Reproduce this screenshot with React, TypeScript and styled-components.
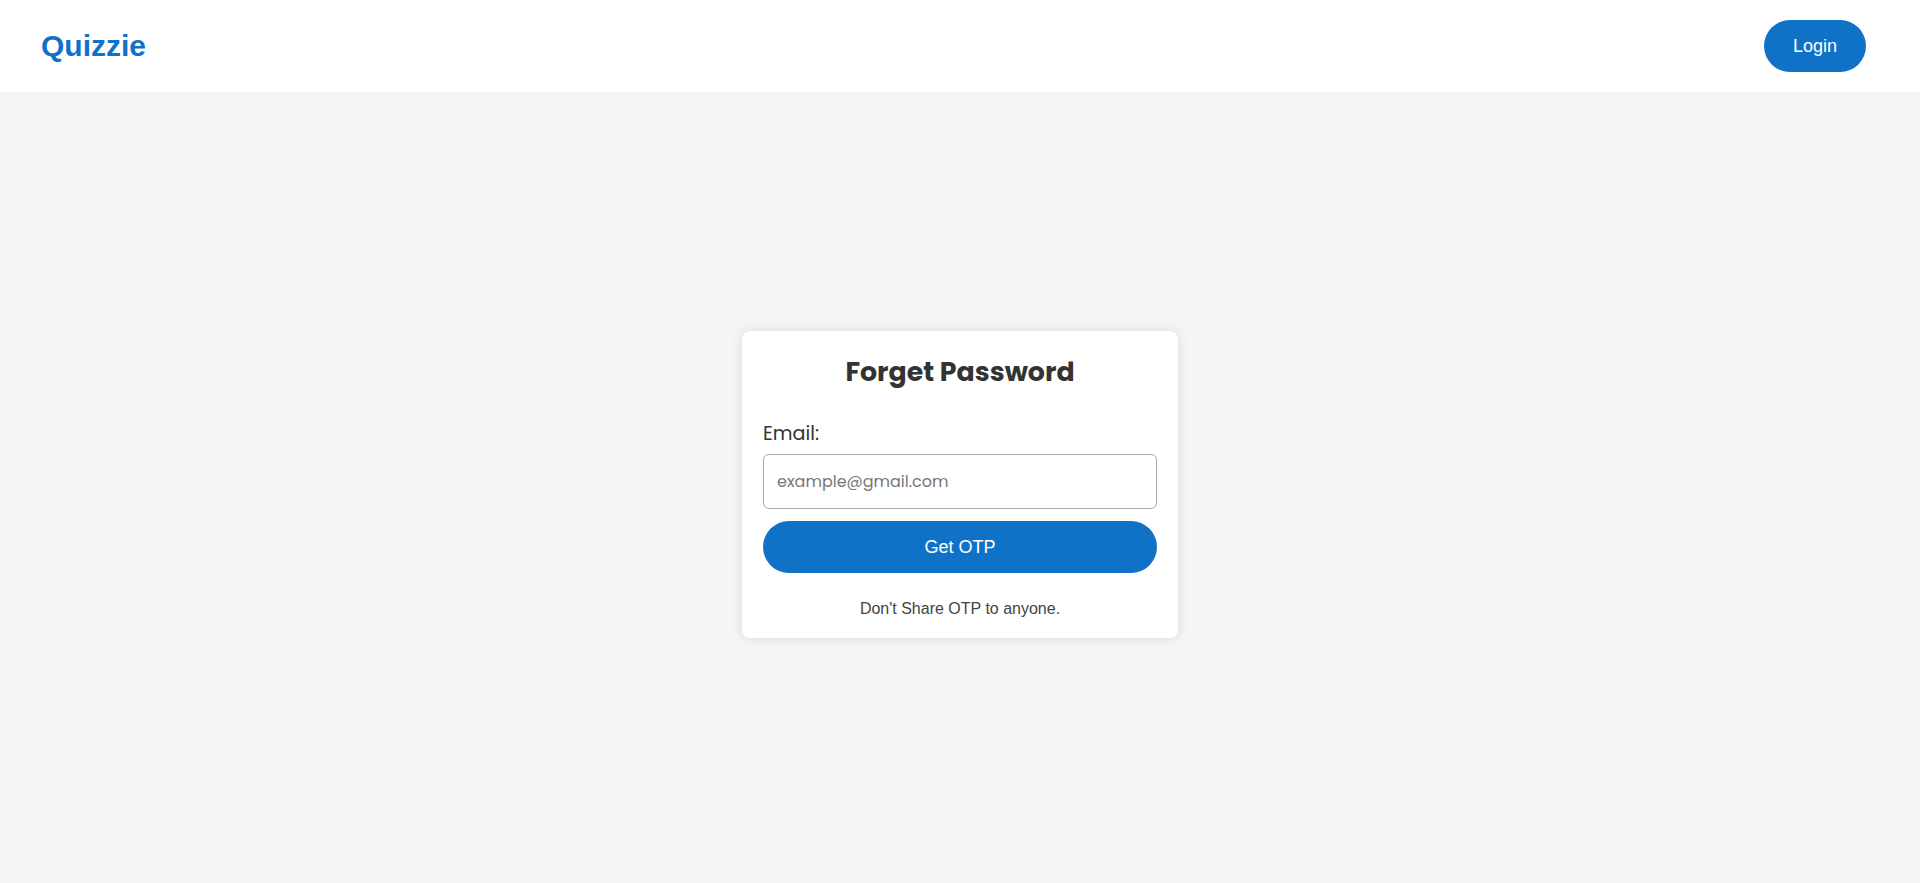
import React from "react";
import styled, { createGlobalStyle } from "styled-components";

const GlobalStyle = createGlobalStyle`
  * { box-sizing: border-box; }
  html, body { margin: 0; padding: 0; }
  body {
    background: #f5f5f5;
    font-family: "Liberation Sans", Arial, sans-serif;
  }
`;

const BLUE = "#1072c7";

const Page = styled.div`
  min-height: 100vh;
  display: flex;
  flex-direction: column;
`;

const Header = styled.header`
  height: 92px;
  flex: 0 0 92px;
  background: #ffffff;
  display: flex;
  align-items: center;
  justify-content: space-between;
  padding: 0 54px 0 41px;
`;

const Logo = styled.div`
  font-family: "Liberation Sans", Arial, sans-serif;
  font-weight: 700;
  font-size: 30px;
  color: ${BLUE};
  line-height: 1;
`;

const PillButton = styled.button<{ $wide?: boolean }>`
  border: none;
  background: ${BLUE};
  color: #ffffff;
  font-family: "Liberation Sans", Arial, sans-serif;
  font-size: 18px;
  border-radius: 999px;
  height: 52px;
  cursor: pointer;
  width: ${(p) => (p.$wide ? "100%" : "102px")};
  padding: 0;
`;

const Main = styled.main`
  flex: 1;
  display: flex;
  align-items: center;
  justify-content: center;
  padding-bottom: 6px;
`;

const Card = styled.div`
  width: 436px;
  background: #ffffff;
  border-radius: 8px;
  box-shadow: 0 0 12px rgba(0, 0, 0, 0.12);
  padding: 24px 21px 19px 21px;
  display: flex;
  flex-direction: column;
`;

const Title = styled.h2`
  margin: 0;
  text-align: center;
  font-family: "Poppins", Inter, sans-serif;
  font-weight: 700;
  font-size: 26.8px;
  line-height: 34px;
  color: #333333;
`;

const Label = styled.label`
  margin-top: 33px;
  font-family: "Poppins", Inter, sans-serif;
  font-size: 19.2px;
  line-height: 24px;
  color: #333333;
`;

const Input = styled.input`
  margin-top: 8px;
  height: 55px;
  width: 100%;
  border: 1px solid #aaaaaa;
  border-radius: 6px;
  padding: 0 13px;
  font-family: "Poppins", Inter, sans-serif;
  font-size: 16px;
  color: #333;
  outline: none;
  &::placeholder {
    color: #777777;
  }
`;

const ButtonRow = styled.div`
  margin-top: 12px;
  display: flex;
`;

const Note = styled.p`
  margin: 26px 0 0 0;
  text-align: center;
  font-family: "Liberation Sans", Arial, sans-serif;
  font-size: 16px;
  line-height: 20px;
  color: #444444;
`;

export default function App() {
  return (
    <>
      <GlobalStyle />
      <Page>
        <Header>
          <Logo>Quizzie</Logo>
          <PillButton>Login</PillButton>
        </Header>
        <Main>
          <Card>
            <Title>Forget Password</Title>
            <Label htmlFor="email">Email:</Label>
            <Input id="email" type="email" placeholder="example@gmail.com" />
            <ButtonRow>
              <PillButton $wide>Get OTP</PillButton>
            </ButtonRow>
            <Note>Don't Share OTP to anyone.</Note>
          </Card>
        </Main>
      </Page>
    </>
  );
}
